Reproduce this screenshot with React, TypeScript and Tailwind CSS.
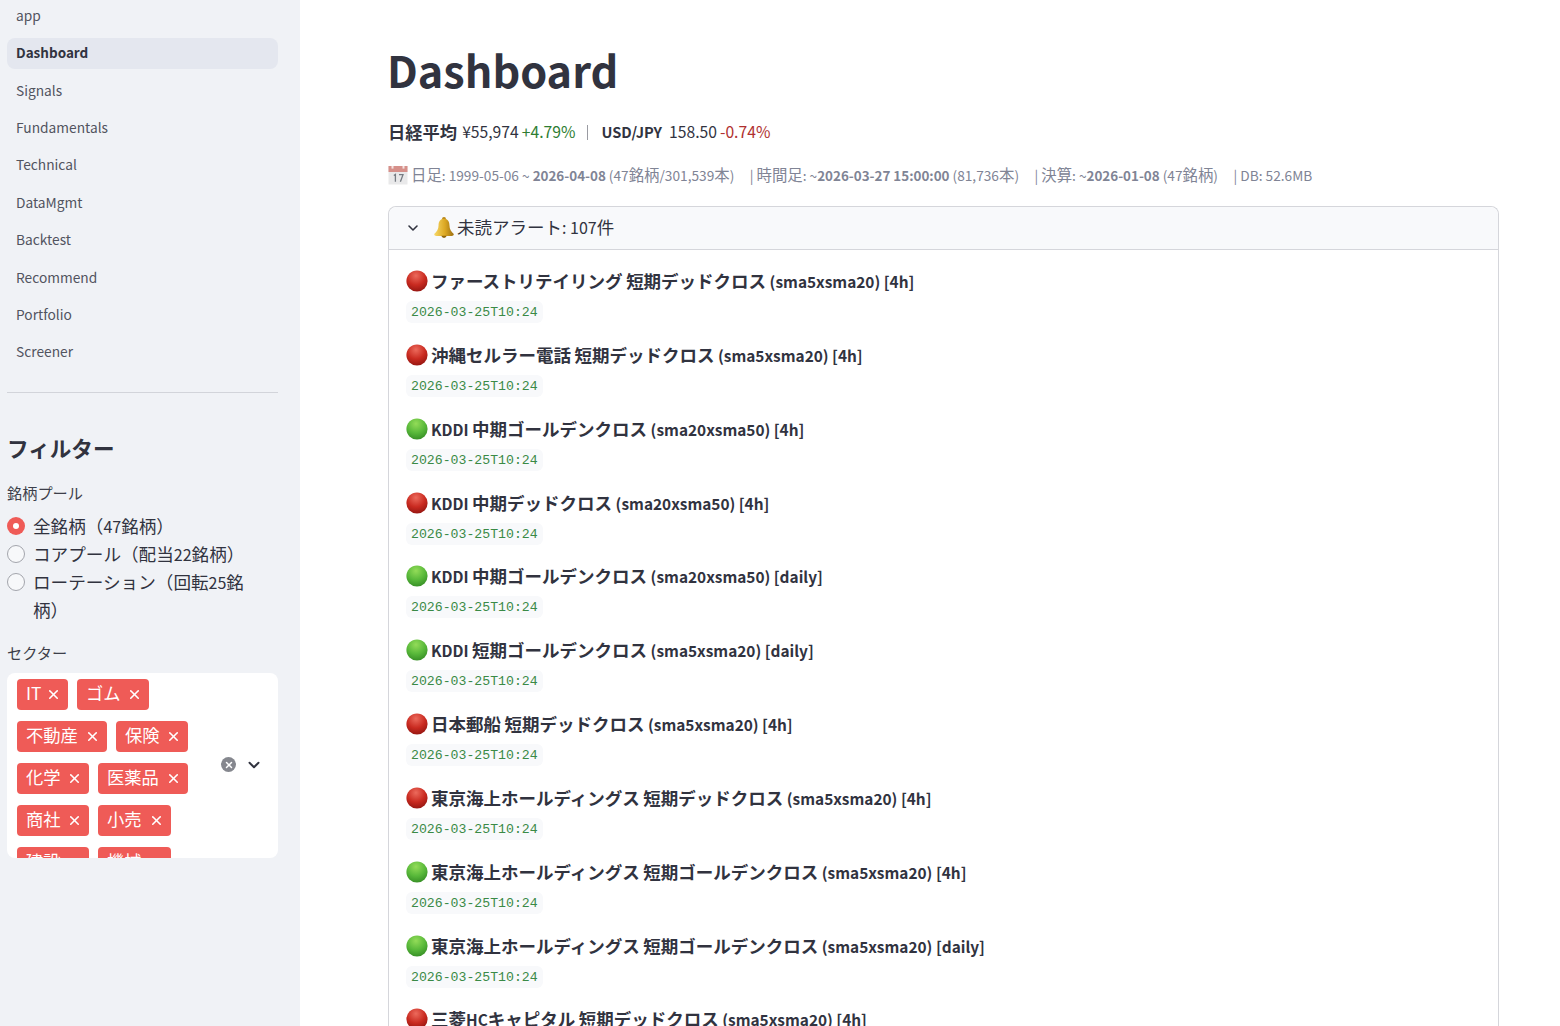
import React from "react";
import { ChevronDown, X } from "lucide-react";

const FONT = "font-['Noto_Sans_CJK_JP','Noto_Sans',sans-serif]";

const nav = ["Signals", "Fundamentals", "Technical", "DataMgmt", "Backtest", "Recommend", "Portfolio", "Screener"];

const tagRows = [
  [["IT", 51], ["ゴム", 72]],
  [["不動産", 90], ["保険", 72]],
  [["化学", 72], ["医薬品", 90]],
  [["商社", 72], ["小売", 73]],
  [["建設", 72], ["機械", 73]],
] as [string, number][][];

const alerts: [string, string, string][] = [
  ["r", "ファーストリテイリング 短期デッドクロス", "(sma5xsma20) [4h]"],
  ["r", "沖縄セルラー電話 短期デッドクロス", "(sma5xsma20) [4h]"],
  ["g", "KDDI 中期ゴールデンクロス", "(sma20xsma50) [4h]"],
  ["r", "KDDI 中期デッドクロス", "(sma20xsma50) [4h]"],
  ["g", "KDDI 中期ゴールデンクロス", "(sma20xsma50) [daily]"],
  ["g", "KDDI 短期ゴールデンクロス", "(sma5xsma20) [daily]"],
  ["r", "日本郵船 短期デッドクロス", "(sma5xsma20) [4h]"],
  ["r", "東京海上ホールディングス 短期デッドクロス", "(sma5xsma20) [4h]"],
  ["g", "東京海上ホールディングス 短期ゴールデンクロス", "(sma5xsma20) [4h]"],
  ["g", "東京海上ホールディングス 短期ゴールデンクロス", "(sma5xsma20) [daily]"],
  ["r", "三菱HCキャピタル 短期デッドクロス", "(sma5xsma20) [4h]"],
];

function Dot({ c }: { c: string }) {
  const id = c === "r" ? "dr" : "dg";
  return (
    <svg width="22" height="22" viewBox="0 0 22 22" className="shrink-0">
      <defs>
        <radialGradient id={id} cx="45%" cy="25%" r="80%">
          <stop offset="0%" stopColor={c === "r" ? "#ec6a5c" : "#93dc58"} />
          <stop offset="55%" stopColor={c === "r" ? "#c92a20" : "#58b83a"} />
          <stop offset="100%" stopColor={c === "r" ? "#8f1410" : "#338a24"} />
        </radialGradient>
      </defs>
      <circle cx="11" cy="11" r="10.6" fill={`url(#${id})`} />
    </svg>
  );
}

function Bell() {
  return (
    <svg width="24" height="24" viewBox="0 0 22 22" className="shrink-0">
      <defs>
        <linearGradient id="bl" x1="0" y1="0" x2="1" y2="0">
          <stop offset="0%" stopColor="#f7d868" />
          <stop offset="55%" stopColor="#dca823" />
          <stop offset="100%" stopColor="#9c6e10" />
        </linearGradient>
      </defs>
      <circle cx="11" cy="2.8" r="1.8" fill="#b98716" />
      <path d="M11 2.5c-3.6 0-5 2.8-5 6 0 3.6-1.6 6-4 8 0 1 .8 1.8 2 1.8h14c1.2 0 2-.8 2-1.8-2.4-2-4-4.4-4-8 0-3.2-1.4-6-5-6z" fill="url(#bl)" />
      <path d="M8.5 18.2a2.6 2.6 0 0 0 5 0z" fill="#8f640e" />
    </svg>
  );
}

function Calendar() {
  return (
    <svg width="20" height="20" viewBox="0 0 20 20" className="shrink-0">
      <rect x="0.5" y="1" width="19" height="18.5" fill="#e9e9ea" />
      <path d="M0.5 1h19v6h-19z" fill="#d6908a" />
      <rect x="3.5" y="1" width="2" height="2.6" fill="#f4e4e2" />
      <rect x="14.5" y="1" width="2" height="2.6" fill="#f4e4e2" />
      <path d="M5.8 10.5l1.6-1v7.2M11 9.7h4l-2.6 7" fill="none" stroke="#767b82" strokeWidth="1.3" />
    </svg>
  );
}

/* Latin runs are set a little smaller than the Japanese runs, as in the picture. */
function T({ s, latin }: { s: string; latin: string }) {
  const parts = s.split(/([\u0020-\u007e¥]+)/).filter(Boolean);
  return (
    <>
      {parts.map((p, i) =>
        /^[\u0020-\u007e¥]+$/.test(p) ? (
          <span key={i} className={latin}>{p}</span>
        ) : (
          <React.Fragment key={i}>{p}</React.Fragment>
        ),
      )}
    </>
  );
}

function Radio({ on, children }: { on?: boolean; children: React.ReactNode }) {
  return (
    <div className="flex gap-[8px] text-[17.6px] leading-[28px] text-[#31333f]">
      <span className={`mt-[5px] flex h-[18px] w-[18px] shrink-0 items-center justify-center rounded-full ${on ? "bg-[#ef5b57]" : "border border-[#a3a5ac] bg-[#f7f8fa]"}`}>
        {on && <span className="h-[6px] w-[6px] rounded-full bg-white" />}
      </span>
      <span>{children}</span>
    </div>
  );
}

export default function App() {
  return (
    <div className={`flex h-[1026px] w-[1560px] overflow-hidden bg-white text-[#31333f] ${FONT}`}>
      <aside className="h-full w-[300px] shrink-0 overflow-hidden bg-[#f0f2f6]">
        <nav className="px-[7px]">
          <div className="flex h-[30px] items-center px-[9px] text-[13.75px] text-[#52545f]">app</div>
          <div className="mt-[8px] flex h-[31px] w-[271px] items-center rounded-lg bg-[#e4e7ef] px-[9px] pb-[2px] text-[13.5px] font-semibold text-[#31333f]">Dashboard</div>
          <div className="mt-[2.2px]">
            {nav.map((n) => (
              <div key={n} className="flex h-[37.4px] items-center px-[9px] text-[13.75px] text-[#52545f]">{n}</div>
            ))}
          </div>
        </nav>
        <div className="mx-[7px] mt-[21.8px] h-px w-[271px] bg-[#d2d4da]" />
        <div className="px-[7px]">
          <h2 className="mt-[39px] text-[21.6px] font-bold leading-[32px]">フィルター</h2>
          <div className="mt-[18px] text-[15.2px] leading-[20px] text-[#3d3f4a]">銘柄プール</div>
          <div className="mt-[10px] w-[245px]">
            <Radio on>全銘柄（<span className="text-[16px]">47</span>銘柄）</Radio>
            <Radio>コアプール（配当<span className="text-[16px]">22</span>銘柄）</Radio>
            <Radio>ローテーション（回転<span className="text-[16px]">25</span>銘柄）</Radio>
          </div>
          <div className="mt-[18px] text-[15.2px] leading-[20px] text-[#3d3f4a]">セクター</div>
          <div className="mt-[11px] flex h-[185px] w-[271px] overflow-hidden rounded-lg bg-white">
            <div className="w-[200px] shrink-0 pl-[10px] pt-[6px]">
              {tagRows.map((row, i) => (
                <div key={i} className="mb-[11px] flex gap-[9px]">
                  {row.map(([t, w]) => (
                    <span key={t} style={{ width: w }} className="flex h-[31px] items-center justify-between rounded bg-[#ef5b57] pl-[9px] pr-[7px] text-[17.3px] text-white">
                      <span className="pb-[3px]">{t}</span>
                      <X size={15} strokeWidth={2.6} />
                    </span>
                  ))}
                </div>
              ))}
            </div>
            <div className="flex flex-1 items-center pb-[2px] pl-[14px]">
              <span className="flex h-[15px] w-[15px] items-center justify-center rounded-full bg-[#85878e] text-white">
                <X size={10} strokeWidth={3.5} />
              </span>
              <ChevronDown size={18} strokeWidth={2.6} className="ml-[9px] text-[#31333f]" />
            </div>
          </div>
        </div>
      </aside>
      <main className="h-full flex-1 overflow-hidden pl-[88px] pr-[61px]">
        <h1 className="-ml-px mt-[38px] text-[43.2px] font-bold leading-[62px] text-[#31333f]">Dashboard</h1>
        <div className="mt-[19px] flex items-center text-[15.7px] leading-[26px]">
          <b className="text-[17.3px] font-semibold">日経平均</b>
          <span className="ml-[5px]">¥55,974</span>
          <span className="ml-[3px] text-[#2e7d32]">+4.79%</span>
          <span className="ml-[12px] mr-[13px] h-[15px] w-px bg-[#9a9ba2]" />
          <b className="text-[14.6px] font-semibold">USD/JPY</b>
          <span className="ml-[7px]">158.50</span>
          <span className="ml-[3px] text-[#b03030]">-0.74%</span>
        </div>
        <div className="mt-[17px] flex h-[26px] items-center whitespace-pre text-[15.4px] text-[#808495]">
          <Calendar />
          <span className="ml-[3px]"><T latin="text-[13.7px]" s="日足: 1999-05-06 ~ " /><b className="text-[13.4px] font-bold">2026-04-08</b><T latin="text-[13.7px]" s=" (47銘柄/301,539本)" /></span>
          <span className="ml-[15.5px]"><T latin="text-[13.7px]" s="| 時間足: ~" /><b className="text-[13.4px] font-bold">2026-03-27 15:00:00</b><T latin="text-[13.7px]" s=" (81,736本)" /></span>
          <span className="ml-[15.5px]"><T latin="text-[13.7px]" s="| 決算: ~" /><b className="text-[13.4px] font-bold">2026-01-08</b><T latin="text-[13.7px]" s=" (47銘柄)" /></span>
          <span className="ml-[15.5px] text-[13.7px]">| DB: 52.6MB</span>
        </div>
        <section className="mt-[18px] rounded-t-lg border border-b-0 border-[#d5d6db]">
          <div className="flex h-[43px] items-center rounded-t-lg border-b border-[#d5d6db] bg-[#f8f9fb] pl-[16px]">
            <ChevronDown size={16} strokeWidth={2.4} className="text-[#31333f]" />
            <span className="ml-[11px]"><Bell /></span>
            <span className="ml-px pb-[2px] text-[17.5px]"><T latin="text-[16px]" s="未読アラート: 107件" /></span>
          </div>
          <div className="pl-[17px] pt-[19px]">
            {alerts.map(([c, a, b], i) => (
              <div key={i} className="h-[73.85px]">
                <div className="flex h-[24px] items-center gap-[3px] text-[17.5px] font-semibold leading-[24px]">
                  <Dot c={c} />
                  <span><T latin="text-[15.4px]" s={`${a} ${b}`} /></span>
                </div>
                <span className="mt-[8px] inline-block h-[22px] rounded-md bg-[#f8f9fb] px-[5px] font-['Liberation_Mono',monospace] text-[13.2px] leading-[23px] text-[#3a8a46]">2026-03-25T10:24</span>
              </div>
            ))}
          </div>
        </section>
      </main>
    </div>
  );
}
